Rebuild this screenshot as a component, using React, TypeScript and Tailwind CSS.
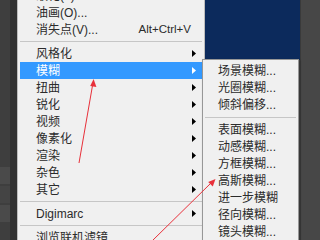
import React from 'react'

type Item =
  | { kind: 'sep' }
  | { kind: 'item'; label: string; shortcut?: string; sub?: boolean; active?: boolean }

const mainItems: Item[] = [
  { kind: 'item', label: '液化(L)...', shortcut: 'Shift+Ctrl+X' },
  { kind: 'item', label: '油画(O)...' },
  { kind: 'item', label: '消失点(V)...', shortcut: 'Alt+Ctrl+V' },
  { kind: 'sep' },
  { kind: 'item', label: '风格化', sub: true },
  { kind: 'item', label: '模糊', sub: true, active: true },
  { kind: 'item', label: '扭曲', sub: true },
  { kind: 'item', label: '锐化', sub: true },
  { kind: 'item', label: '视频', sub: true },
  { kind: 'item', label: '像素化', sub: true },
  { kind: 'item', label: '渲染', sub: true },
  { kind: 'item', label: '杂色', sub: true },
  { kind: 'item', label: '其它', sub: true },
  { kind: 'sep' },
  { kind: 'item', label: 'Digimarc', sub: true },
  { kind: 'sep' },
  { kind: 'item', label: '浏览联机滤镜...' },
]

const blurItems: Item[] = [
  { kind: 'item', label: '场景模糊...' },
  { kind: 'item', label: '光圈模糊...' },
  { kind: 'item', label: '倾斜偏移...' },
  { kind: 'sep' },
  { kind: 'item', label: '表面模糊...' },
  { kind: 'item', label: '动感模糊...' },
  { kind: 'item', label: '方框模糊...' },
  { kind: 'item', label: '高斯模糊...' },
  { kind: 'item', label: '进一步模糊' },
  { kind: 'item', label: '径向模糊...' },
  { kind: 'item', label: '镜头模糊...' },
  { kind: 'item', label: '模糊' },
]

function SubArrow({ white }: { white?: boolean }) {
  return (
    <svg width="4" height="7" viewBox="0 0 4 7" className="ml-auto">
      <path d="M0 0 L4 3.5 L0 7 Z" fill={white ? '#ffffff' : '#000000'} />
    </svg>
  )
}

export default function App() {
  return (
    <div className="relative w-[320px] h-[240px] overflow-hidden bg-[#474747] font-['Liberation_Sans','Noto_Sans_CJK_SC',sans-serif] text-[12px] leading-none">
      {/* background panels */}
      <div className="flex h-full">
        <div className="w-[10px] flex flex-col bg-[#3e3e3e]">
          <div className="h-[165px]" />
          <div className="h-[17px] mt-[2px] bg-[#4a4a4a]" />
          <div className="h-[17px] mt-[2px] bg-[#444444]" />
          <div className="h-[17px] mt-[2px] bg-[#4a4a4a]" />
        </div>
        <div className="w-[7px] bg-[#323232]" />
        <div className="w-[188px] bg-[#f0f0f0]" />
        <div className="w-[95px] flex flex-col">
          <div className="h-[60px] bg-[#0c2a5c]" />
          <div className="flex-1 bg-[#474747]" />
        </div>
        <div className="flex-1 bg-[#474747] border-l border-[#3a3a3a]" />
      </div>

      {/* main filter menu */}
      <div className="absolute left-[17px] top-[-13px] w-[188px] bg-[#f0f0f0] border-x border-[#bdbdbd] text-[#2b2b2b]">
        {mainItems.map((it, i) =>
          it.kind === 'sep' ? (
            <div key={i} className="h-[7px] flex items-center pl-[2px] pr-[2px]">
              <div className="w-full h-[1px] bg-[#c6c6c6]" />
            </div>
          ) : (
            <div
              key={i}
              className={`h-[17px] flex items-center mx-[2px] pl-[16px] pr-[6px] ${
                it.active ? 'bg-[#3399ff] text-white' : ''
              }`}
            >
              <span>{it.label}</span>
              {it.shortcut && <span className="ml-auto mr-[5px] text-[11.5px]">{it.shortcut}</span>}
              {it.sub && <SubArrow white={it.active} />}
            </div>
          )
        )}
      </div>

      {/* blur submenu */}
      <div className="absolute left-[202px] top-[59px] w-[97px] pt-[2px] bg-[#f0f0f0] border border-[#979797] shadow-[1px_1px_2px_rgba(0,0,0,0.3)] text-[#2b2b2b]">
        {blurItems.map((it, i) =>
          it.kind === 'sep' ? (
            <div key={i} className="h-[8px] flex items-center px-[2px]">
              <div className="w-full h-[1px] bg-[#c6c6c6]" />
            </div>
          ) : (
            <div key={i} className="h-[17px] flex items-center pl-[15px]">
              {it.label}
            </div>
          )
        )}
      </div>

      {/* red annotation arrows */}
      <svg className="absolute inset-0 pointer-events-none" width="320" height="240" viewBox="0 0 320 240">
        <line x1="79" y1="163" x2="92.6" y2="85" stroke="#e8303a" strokeWidth="1" />
        <path d="M93.6 79 L96.4 87 L90.2 86 Z" fill="#e8303a" />
        <line x1="152" y1="241" x2="211" y2="183" stroke="#e8303a" strokeWidth="1" />
        <path d="M215.5 179 L212.8 186.6 L208.2 182 Z" fill="#e8303a" />
      </svg>
    </div>
  )
}
